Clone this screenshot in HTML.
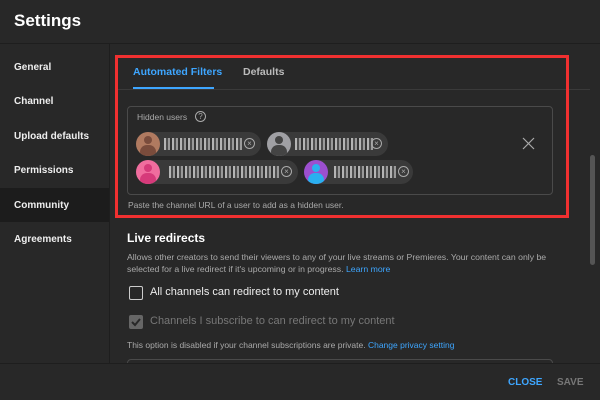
<!DOCTYPE html><html><head><style>
*{margin:0;padding:0;box-sizing:border-box}
body{width:600px;height:400px;background:#282828;font-family:"Liberation Sans",sans-serif;color:#fff;position:relative;overflow:hidden}
.a{position:absolute}
.nav{left:14px;font-size:10px;font-weight:bold;color:#eee}
.chip{position:absolute;height:24px;border-radius:12px;background:#3a3a3a}
.av{position:absolute;left:0;top:0;width:24px;height:24px;border-radius:12px;overflow:hidden}
.pix{position:absolute;left:28px;top:6px;height:12px;background:repeating-linear-gradient(90deg,#ddd 0 2px,#555 2px 4px,#bbb 4px 6px,#333 6px 8px),repeating-linear-gradient(0deg,#000 0 2px,transparent 2px 4px);opacity:.75}
.xc{position:absolute;top:6px;width:11px;height:11px;border:1px solid #aaa;border-radius:50%;color:#aaa;font-size:8px;line-height:9px;text-align:center}
</style></head><body>
<div class="a" style="left:14px;top:11px;font-size:17px;font-weight:bold">Settings</div>
<div class="a" style="left:0;top:43px;width:600px;height:1px;background:#1e1e1e"></div>
<div class="a" style="left:109px;top:44px;width:1px;height:319px;background:#1e1e1e"></div>
<div class="a" style="left:0;top:188px;width:109px;height:34px;background:#1c1c1c"></div>
<div class="a nav" style="top:62px">General</div>
<div class="a nav" style="top:96px">Channel</div>
<div class="a nav" style="top:131px">Upload defaults</div>
<div class="a nav" style="top:165px">Permissions</div>
<div class="a nav" style="top:200px">Community</div>
<div class="a nav" style="top:234px">Agreements</div>
<div class="a" style="left:115px;top:89px;width:475px;height:1px;background:#3a3a3a"></div>
<div class="a" style="left:133px;top:66px;font-size:10.5px;font-weight:bold;color:#3ea6ff">Automated Filters</div>
<div class="a" style="left:133px;top:87px;width:81px;height:2px;background:#3ea6ff"></div>
<div class="a" style="left:243px;top:66px;font-size:10.5px;font-weight:bold;color:#bbb">Defaults</div>
<div class="a" style="left:127px;top:106px;width:426px;height:89px;border:1px solid #4a4a4a;border-radius:4px"></div>
<div class="a" style="left:137px;top:112px;font-size:8.5px;color:#aaa">Hidden users</div>
<div class="a" style="left:195px;top:111px;width:11px;height:11px;border:1px solid #aaa;border-radius:50%;font-size:8px;color:#aaa;text-align:center;line-height:9px">?</div>
<div class="chip" style="left:136px;top:132px;width:125px"><div class="av" style="background:#b07a60"><div class="a" style="left:8px;top:4px;width:8px;height:8px;border-radius:50%;background:#7a4c3c"></div><div class="a" style="left:4px;top:13px;width:16px;height:14px;border-radius:8px;background:#7a4c3c"></div></div><div class="pix" style="width:78px"></div><div class="xc" style="left:108px">×</div></div>
<div class="chip" style="left:267px;top:132px;width:121px"><div class="av" style="background:#a0a0a4"><div class="a" style="left:8px;top:4px;width:8px;height:8px;border-radius:50%;background:#444"></div><div class="a" style="left:4px;top:13px;width:16px;height:14px;border-radius:8px;background:#444"></div></div><div class="pix" style="width:78px"></div><div class="xc" style="left:104px">×</div></div>
<div class="chip" style="left:136px;top:160px;width:162px"><div class="av" style="background:#f06d9e"><div class="a" style="left:8px;top:4px;width:8px;height:8px;border-radius:50%;background:#d63a7a"></div><div class="a" style="left:4px;top:13px;width:16px;height:14px;border-radius:8px;background:#d63a7a"></div></div><div class="pix" style="left:33px;width:110px"></div><div class="xc" style="left:145px">×</div></div>
<div class="chip" style="left:304px;top:160px;width:109px"><div class="av" style="background:#9c4fcf"><div class="a" style="left:8px;top:4px;width:8px;height:8px;border-radius:50%;background:#2ab0f0"></div><div class="a" style="left:4px;top:13px;width:16px;height:14px;border-radius:8px;background:#2ab0f0"></div></div><div class="pix" style="left:30px;width:62px"></div><div class="xc" style="left:94px">×</div></div>
<svg class="a" style="left:522px;top:137px" width="13" height="13"><path d="M1 1L12 12M12 1L1 12" stroke="#aaa" stroke-width="1.2"/></svg>
<div class="a" style="left:128px;top:200px;font-size:8.5px;color:#aaa">Paste the channel URL of a user to add as a hidden user.</div>
<div class="a" style="left:115px;top:55px;width:454px;height:163px;border:3px solid #f03030"></div>
<div class="a" style="left:127px;top:231px;font-size:12px;font-weight:bold">Live redirects</div>
<div class="a" style="left:127px;top:251px;font-size:8.7px;color:#aaa;line-height:12px;width:430px">Allows other creators to send their viewers to any of your live streams or Premieres. Your content can only be selected for a live redirect if it's upcoming or in progress. <span style="color:#3ea6ff">Learn more</span></div>
<div class="a" style="left:129px;top:286px;width:14px;height:14px;border:1.5px solid #ccc;border-radius:2px"></div>
<div class="a" style="left:150px;top:286px;font-size:11px;color:#eee">All channels can redirect to my content</div>
<div class="a" style="left:129px;top:315px;width:14px;height:14px;background:#666;border-radius:2px"><svg width="14" height="14"><path d="M3 7l3 3 5-6" stroke="#282828" stroke-width="2" fill="none"/></svg></div>
<div class="a" style="left:150px;top:315px;font-size:11px;color:#777">Channels I subscribe to can redirect to my content</div>
<div class="a" style="left:127px;top:340px;font-size:8.5px;color:#aaa">This option is disabled if your channel subscriptions are private. <span style="color:#3ea6ff">Change privacy setting</span></div>
<div class="a" style="left:127px;top:359px;width:426px;height:10px;border:1px solid #4a4a4a;border-radius:4px"></div>
<div class="a" style="left:590px;top:155px;width:5px;height:110px;background:#555;border-radius:3px"></div>
<div class="a" style="left:0;top:363px;width:600px;height:37px;background:#282828;border-top:1px solid #1e1e1e"></div>
<div class="a" style="left:508px;top:377px;font-size:10px;font-weight:bold;color:#3ea6ff">CLOSE</div>
<div class="a" style="left:557px;top:377px;font-size:10px;font-weight:bold;color:#777">SAVE</div>
</body></html>
